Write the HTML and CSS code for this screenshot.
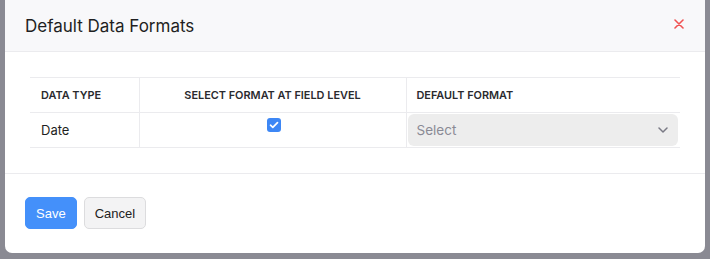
FILE: index.html
```html
<!DOCTYPE html>
<html lang="en">
<head>
  <meta charset="UTF-8" />
  <title>Default Data Formats</title>
  <link rel="stylesheet" href="styles.css">
</head>
<body>

  <div class="modal">
    <div class="modal-header">
      <h3>Default Data Formats</h3>
      <button class="close-btn" title="Close">
        <svg width="10" height="10" viewBox="0 0 10 10"><path d="M1 1L9 9M9 1L1 9" stroke="#f05252" stroke-width="1.6" stroke-linecap="round"/></svg>
      </button>
    </div>

    <div class="modal-body">
      <table class="formats">
        <thead>
          <tr>
            <th class="col-type">Data Type</th>
            <th class="col-field">Select Format at Field Level</th>
            <th class="col-default">Default Format</th>
          </tr>
        </thead>
        <tbody>
          <tr>
            <td class="col-type">Date</td>
            <td class="col-field">
              <span class="checkbox">
                <svg width="10" height="8" viewBox="0 0 10 8"><path d="M1.5 4.2L3.8 6.3L8.5 1.6" fill="none" stroke="#fff" stroke-width="1.7" stroke-linecap="round" stroke-linejoin="round"/></svg>
              </span>
            </td>
            <td class="col-default">
              <div class="select">
                <span>Select</span>
                <svg width="10" height="6" viewBox="0 0 10 6"><path d="M1 1L5 5L9 1" fill="none" stroke="#7a7a85" stroke-width="1.5" stroke-linecap="round" stroke-linejoin="round"/></svg>
              </div>
            </td>
          </tr>
        </tbody>
      </table>
    </div>

    <div class="modal-footer">
      <button class="btn btn-primary">Save</button>
      <button class="btn btn-default">Cancel</button>
    </div>
  </div>

</body>
</html>
```

FILE: styles.css
```css
:root {
  --overlay: #8a8a93;
  --header-bg: #f8f8fa;
  --border: #ebebee;
  --text: #1f1f22;
  --muted: #8a8a95;
  --accent: #4490fa;
}
* { box-sizing: border-box; margin: 0; padding: 0; }
body {
  font-family: Inter, 'Noto Sans', sans-serif;
  background: var(--overlay);
  color: var(--text);
  padding: 0 5px;
}
.modal {
  background: #fff;
  border-radius: 0 0 7px 7px;
  overflow: hidden;
}
.modal-header {
  display: flex;
  justify-content: space-between;
  align-items: center;
  background: var(--header-bg);
  border-bottom: 1px solid var(--border);
  height: 52px;
  padding: 0 21px 0 20px;
}
.modal-header h3 {
  font-size: 17px;
  font-weight: 400;
  line-height: 25px;
  margin-top: 1px;
}
.close-btn {
  background: none;
  border: none;
  width: 10px;
  height: 10px;
  display: flex;
  margin-top: -4px;
  cursor: pointer;
}
.modal-body {
  padding: 25px 25px 25px;
  border-bottom: 1px solid var(--border);
}
.formats {
  width: 100%;
  border-collapse: collapse;
}
.formats th,
.formats td {
  height: 35px;
  border-top: 1px solid var(--border);
  border-bottom: 1px solid var(--border);
  text-align: left;
  padding: 0 10px;
}
.formats th + th,
.formats td + td {
  border-left: 1px solid var(--border);
}
.formats th {
  font-size: 10.9px;
  font-weight: 600;
  text-transform: uppercase;
  color: #2a2a2e;
}
.formats td {
  font-size: 13px;
}
.col-type { width: 109px; padding-left: 11px !important; }
.col-field { width: 267px; }
.formats th.col-field,
.formats td.col-field { text-align: center; }
.formats td.col-field { vertical-align: top; padding-top: 3px; }
.formats td.col-default { padding: 0 2px 0 1px; }
.checkbox {
  display: inline-flex;
  align-items: center;
  justify-content: center;
  width: 14px;
  height: 14px;
  border-radius: 3px;
  background: #3d87f5;
  margin-left: 2px;
}
.select {
  display: flex;
  align-items: center;
  justify-content: space-between;
  height: 32px;
  background: #ededed;
  border-radius: 6px;
  padding: 0 10px 0 9px;
  font-size: 13.5px;
  color: var(--muted);
}
.modal-footer {
  display: flex;
  gap: 7px;
  padding: 23px 20px 24px;
}
.btn {
  font-family: 'Liberation Sans', Arial, sans-serif;
  font-size: 13px;
  height: 32px;
  padding: 0 10px;
  border-radius: 5px;
  cursor: pointer;
}
.btn-primary {
  background: var(--accent);
  color: #fff;
  border: 1px solid var(--accent);
}
.btn-default {
  background: #f3f3f4;
  color: #222;
  border: 1px solid #dcdcde;
}
```
